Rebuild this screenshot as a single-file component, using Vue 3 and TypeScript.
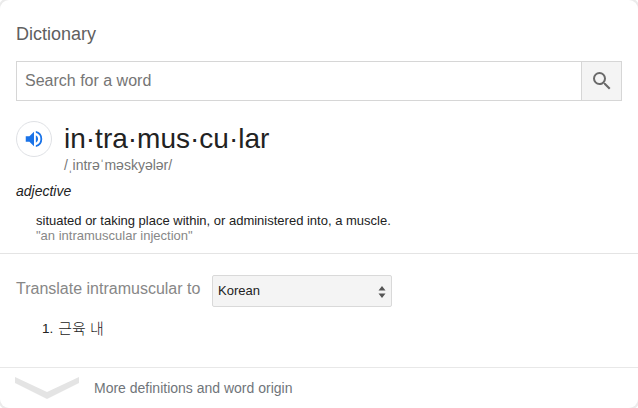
<script setup lang="ts">
import { ref } from 'vue'

const query = ref('')
const syllables: string[] = ['in', 'tra', 'mus', 'cu', 'lar']
const translations: string[] = ['근육 내']
</script>

<template>
  <main class="card">
    <section class="lookup">
      <h1 class="title">Dictionary</h1>
      <form class="search" @submit.prevent>
        <input v-model="query" class="field" type="text" placeholder="Search for a word" />
        <button class="go" aria-label="Search">
          <svg width="24" height="24" viewBox="0 0 24 24" fill="#6a6a6a">
            <path d="M15.5 14h-.79l-.28-.27A6.47 6.47 0 0 0 16 9.5 6.5 6.5 0 1 0 9.5 16c1.61 0 3.09-.59 4.23-1.57l.27.28v.79l5 4.99L20.49 19l-4.99-5zm-6 0C7.01 14 5 11.99 5 9.5S7.01 5 9.5 5 14 7.01 14 9.5 11.99 14 9.5 14z" />
          </svg>
        </button>
      </form>
      <div class="entry">
        <button class="speak" aria-label="Listen">
          <svg width="22" height="22" viewBox="0 0 24 24" fill="#1a73e8">
            <path d="M3 9v6h4l5 5V4L7 9H3zm13.5 3A4.5 4.5 0 0 0 14 7.97v8.05A4.48 4.48 0 0 0 16.500 12zM14 3.230v2.060a7 7 0 0 1 0 13.420v2.060a9 9 0 0 0 0-17.540z" />
          </svg>
        </button>
        <div class="heading">
          <div class="word">{{ syllables.join('·') }}</div>
          <div class="phonetic">/ˌintrəˈməskyələr/</div>
        </div>
      </div>
      <div class="pos">adjective</div>
      <div class="sense">
        <div class="meaning">situated or taking place within, or administered into, a muscle.</div>
        <div class="example">"an intramuscular injection"</div>
      </div>
    </section>
    <section class="translate">
      <div class="target">
        <span class="label">Translate intramuscular to</span>
        <button class="select">
          <span>Korean</span>
          <svg width="8" height="12" viewBox="0 0 8 12" fill="#555">
            <path d="M0.500 4.500L4 0L7.500 4.500zM0.500 7.500L4 12L7.500 7.500z" />
          </svg>
        </button>
      </div>
      <div v-for="(item, i) in translations" :key="item" class="result">
        <span class="number">{{ i + 1 }}.</span><span class="korean">{{ item }}</span>
      </div>
    </section>
    <footer class="more">
      <svg width="64" height="22" viewBox="0 0 64 22" fill="#e4e4e4">
        <path d="M0 0L32 15L64 0V6L32 22L0 6z" />
      </svg>
      <span class="more-text">More definitions and word origin</span>
    </footer>
  </main>
</template>

<style>
body {
  background: #fff;
}
</style>

<style scoped>
.card {
  box-sizing: border-box;
  width: 638px;
  height: 408px;
  display: flex;
  flex-direction: column;
  overflow: hidden;
  border-radius: 9px;
  background: #fff;
  box-shadow: 0 0 0 2px #ebebeb;
  font-family: "Liberation Sans", "Noto Sans CJK KR", sans-serif;
  color: #222;
}
button {
  box-sizing: border-box;
  padding: 0;
  font-family: inherit;
}
.lookup {
  box-sizing: border-box;
  height: 254px;
  padding: 22px 16px 0;
  border-bottom: 1px solid #e4e4e4;
}
.title {
  margin: 0;
  font-size: 18px;
  line-height: 24px;
  font-weight: 400;
  color: #606060;
}
.search {
  display: flex;
  height: 40px;
  margin-top: 15px;
}
.field {
  box-sizing: border-box;
  flex: 1;
  min-width: 0;
  border: 1px solid #d6d6d6;
  border-right: 0;
  padding: 0 8px;
  font: 16px "Liberation Sans", sans-serif;
  color: #222;
  outline: 0;
}
.field::placeholder {
  color: #757575;
}
.go {
  display: flex;
  align-items: center;
  justify-content: center;
  width: 41px;
  border: 1px solid #d6d6d6;
  background: #f4f4f4;
}
.entry {
  display: flex;
  gap: 12px;
  margin-top: 20px;
}
.speak {
  display: flex;
  align-items: center;
  justify-content: center;
  width: 36px;
  height: 36px;
  border: 1px solid #dfe1e5;
  border-radius: 50%;
  background: #fff;
}
.word {
  padding-top: 1px;
  font-size: 28px;
  line-height: 34px;
}
.phonetic {
  font-size: 14px;
  line-height: 18px;
  color: #777;
}
.pos {
  margin-top: 8px;
  font-size: 14px;
  line-height: 18px;
  font-style: italic;
}
.sense {
  padding: 13px 0 0 20px;
  font-size: 13px;
  line-height: 15px;
}
.example {
  color: #878787;
}
.translate {
  box-sizing: border-box;
  height: 114px;
  padding: 21px 16px 0;
  border-bottom: 1px solid #e8e8e8;
}
.target {
  display: flex;
}
.label {
  width: 196px;
  font-size: 16px;
  line-height: 27px;
  white-space: nowrap;
  color: #878787;
}
.select {
  display: flex;
  align-items: center;
  justify-content: space-between;
  width: 180px;
  height: 32px;
  padding: 0 5px 1px;
  border: 1px solid #d9d9d9;
  border-radius: 2px;
  background: #f4f4f4;
  font-size: 13px;
  color: #222;
}
.select svg {
  margin-top: 2px;
}
.result {
  display: flex;
  gap: 5px;
  padding: 12px 0 0 26px;
  font-size: 13px;
  line-height: 20px;
}
.number {
  font-size: 13.5px;
}
.korean {
  font-size: 15px;
  font-weight: 300;
}
.more {
  display: flex;
  gap: 15px;
  padding: 9px 15px 0;
}
.more-text {
  font-size: 14px;
  line-height: 22px;
  color: #70757a;
}
</style>
